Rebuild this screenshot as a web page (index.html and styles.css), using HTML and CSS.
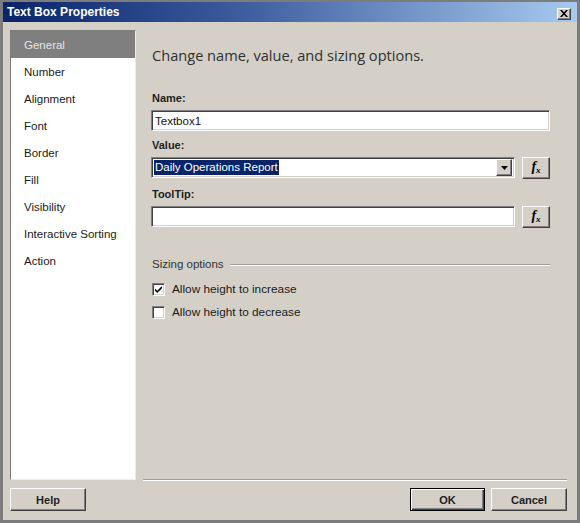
FILE: index.html
```html
<!DOCTYPE html>
<html>
<head>
<meta charset="utf-8">
<title>Text Box Properties</title>
<link rel="stylesheet" href="styles.css">
</head>
<body>
<div class="window">
  <div class="titlebar">
    <span class="title">Text Box Properties</span>
    <span class="close"><svg width="8" height="7" viewBox="0 0 8 7"><path d="M0 0h2l2 2.2L6 0h2L5 3.5 8 7H6L4 4.8 2 7H0l3-3.5z" fill="#000"/></svg></span>
  </div>
  <div class="body">
    <div class="content">
      <ul class="nav">
        <li class="active">General</li>
        <li>Number</li>
        <li>Alignment</li>
        <li>Font</li>
        <li>Border</li>
        <li>Fill</li>
        <li>Visibility</li>
        <li>Interactive Sorting</li>
        <li>Action</li>
      </ul>
      <div class="main">
        <h1 class="heading">Change name, value, and sizing options.</h1>
        <div class="lbl lbl-first">Name:</div>
        <div class="field field-full"><span class="val">Textbox1</span></div>
        <div class="lbl lbl-value">Value:</div>
        <div class="row">
          <div class="field field-short"><span class="val sel">Daily Operations Report</span><span class="drop"><svg width="7" height="4" viewBox="0 0 7 4"><path d="M0 0h7L3.5 4z" fill="#000"/></svg></span></div>
          <button class="fx">f<span class="fxsub">x</span></button>
        </div>
        <div class="lbl lbl-tip">ToolTip:</div>
        <div class="row">
          <div class="field field-short"></div>
          <button class="fx">f<span class="fxsub">x</span></button>
        </div>
        <div class="group"><span class="group-text">Sizing options</span><span class="rule"></span></div>
        <div class="check check-first"><span class="box"><svg width="9" height="9" viewBox="0 0 9 9"><path d="M1 3.5l2.2 2.2L8 1v2.2L3.2 8 1 5.8z" fill="#000"/></svg></span>Allow height to increase</div>
        <div class="check check-second"><span class="box"></span>Allow height to decrease</div>
      </div>
    </div>
    <div class="footer">
      <button class="btn">Help</button>
      <span class="spacer"></span>
      <button class="btn btn-default">OK</button>
      <button class="btn">Cancel</button>
    </div>
  </div>
</div>
</body>
</html>
```
FILE: styles.css
```css
html, body {
  margin: 0;
  padding: 0;
  background: #d4d0c8;
}
body {
  font-family: "Liberation Sans", Arial, sans-serif;
}
.window {
  width: 580px;
  height: 523px;
  box-sizing: border-box;
  border: 3px solid #7c7c7c;
  border-top-width: 2px;
  background: #d4d0c8;
  display: flex;
  flex-direction: column;
}
.titlebar {
  height: 20px;
  flex-shrink: 0;
  background: linear-gradient(to right, #0a246a 0%, #3a5a9c 40%, #a6caf0 100%);
  display: flex;
  align-items: center;
  justify-content: space-between;
  padding: 0 6px 0 4px;
}
.title {
  color: #fff;
  font-weight: bold;
  font-size: 12px;
}
.close {
  width: 14px;
  height: 12px;
  box-sizing: border-box;
  background: #d4d0c8;
  border: 1px solid;
  border-color: #fff #404040 #404040 #fff;
  box-shadow: inset -1px -1px #808080;
  display: flex;
  align-items: center;
  justify-content: center;
  margin-top: 3px;
}
.body {
  flex: 1;
  display: flex;
  flex-direction: column;
  padding: 8px 10px 9px 7px;
}
.content {
  display: flex;
  height: 450px;
}
.nav {
  width: 126px;
  margin: 0;
  padding: 0;
  list-style: none;
  background: #fff;
  box-sizing: border-box;
  border-top: 1px solid #7a7a7a;
  border-left: 1px solid #7a7a7a;
  border-right: 1px solid #ececec;
  border-bottom: 1px solid #ececec;
}
.nav li {
  height: 27px;
  line-height: 28px;
  padding-left: 13px;
  font-size: 11.5px;
  color: #1a1a1a;
}
.nav li.active {
  background: #7f7f7f;
  color: #e4e4e4;
}
.main {
  flex: 1;
  margin-left: 7px;
  border-bottom: 1px solid #a09d96;
  box-shadow: 0 1px 0 #fff;
  padding: 15px 17px 0 8px;
  display: flex;
  flex-direction: column;
}
.heading {
  margin: 0 0 0 1px;
  font-family: "Open Sans", "Liberation Sans", sans-serif;
  font-weight: 400;
  font-size: 14.6px;
  line-height: 20px;
  color: #303030;
}
.lbl {
  font-weight: bold;
  font-size: 11px;
  line-height: 13px;
  color: #1e1e1e;
  margin-left: 1px;
}
.lbl-first { margin-top: 27px; }
.lbl-value { margin-top: 8px; }
.lbl-tip { margin-top: 9px; }
.field {
  height: 21px;
  box-sizing: border-box;
  background: #fff;
  border: 1px solid;
  border-color: #808080 #fff #fff #808080;
  box-shadow: inset 1px 1px #404040, inset -1px -1px #d4d0c8;
  display: flex;
  align-items: center;
  padding: 0 2px 0 2px;
  font-size: 11.5px;
  color: #111;
}
.field-full {
  margin-top: 5px;
}
.field-short {
  width: 364px;
}
.val {
  padding-left: 1px;
}
.sel {
  background: #0a246a;
  color: #fff;
  line-height: 15px;
  padding: 0 1px;
}
.drop {
  margin-left: auto;
  width: 16px;
  height: 17px;
  box-sizing: border-box;
  background: #d4d0c8;
  border: 1px solid;
  border-color: #fff #404040 #404040 #fff;
  box-shadow: inset -1px -1px #808080;
  display: flex;
  align-items: center;
  justify-content: center;
}
.row {
  display: flex;
  gap: 7px;
  margin-top: 5px;
  align-items: flex-start;
}
.fx {
  width: 28px;
  height: 22px;
  box-sizing: border-box;
  padding: 0 0 2px 0;
  background: #d4d0c8;
  border: 1px solid;
  border-color: #fff #404040 #404040 #fff;
  box-shadow: inset -1px -1px #808080;
  font-family: "Liberation Serif", "Times New Roman", serif;
  font-style: italic;
  font-weight: bold;
  font-size: 14px;
  color: #000;
  line-height: 1;
}
.fxsub {
  font-size: 9px;
  position: relative;
  top: 2px;
}
.group {
  margin-top: 29px;
  display: flex;
  align-items: center;
  gap: 6px;
  font-size: 11.5px;
  line-height: 15px;
  color: #333;
  margin-left: 1px;
}
.rule {
  flex: 1;
  border-top: 1px solid #a09d96;
  border-bottom: 1px solid #fff;
}
.check {
  display: flex;
  align-items: center;
  font-size: 11.8px;
  line-height: 15px;
  color: #1a1a1a;
  margin-left: 1px;
}
.check-first { margin-top: 10px; }
.check-second { margin-top: 8px; }
.box {
  width: 13px;
  height: 13px;
  box-sizing: border-box;
  background: #fff;
  border: 1px solid;
  border-color: #808080 #fff #fff #808080;
  box-shadow: inset 1px 1px #404040, inset -1px -1px #d4d0c8;
  margin-right: 7px;
  display: flex;
  align-items: center;
  justify-content: center;
}
.footer {
  display: flex;
  padding-top: 8px;
  gap: 6px;
}
.spacer {
  flex: 1;
}
.btn {
  width: 76px;
  height: 23px;
  box-sizing: border-box;
  background: #d4d0c8;
  border: 1px solid;
  border-color: #fff #404040 #404040 #fff;
  box-shadow: inset -1px -1px #808080;
  font-family: "Liberation Sans", Arial, sans-serif;
  font-weight: bold;
  font-size: 11px;
  color: #222;
  padding: 0;
}
.btn-default {
  width: 75px;
  border: 1px solid #000;
  box-shadow: inset 1px 1px #fff, inset -1px -1px #404040, inset -2px -2px #808080;
}
```
